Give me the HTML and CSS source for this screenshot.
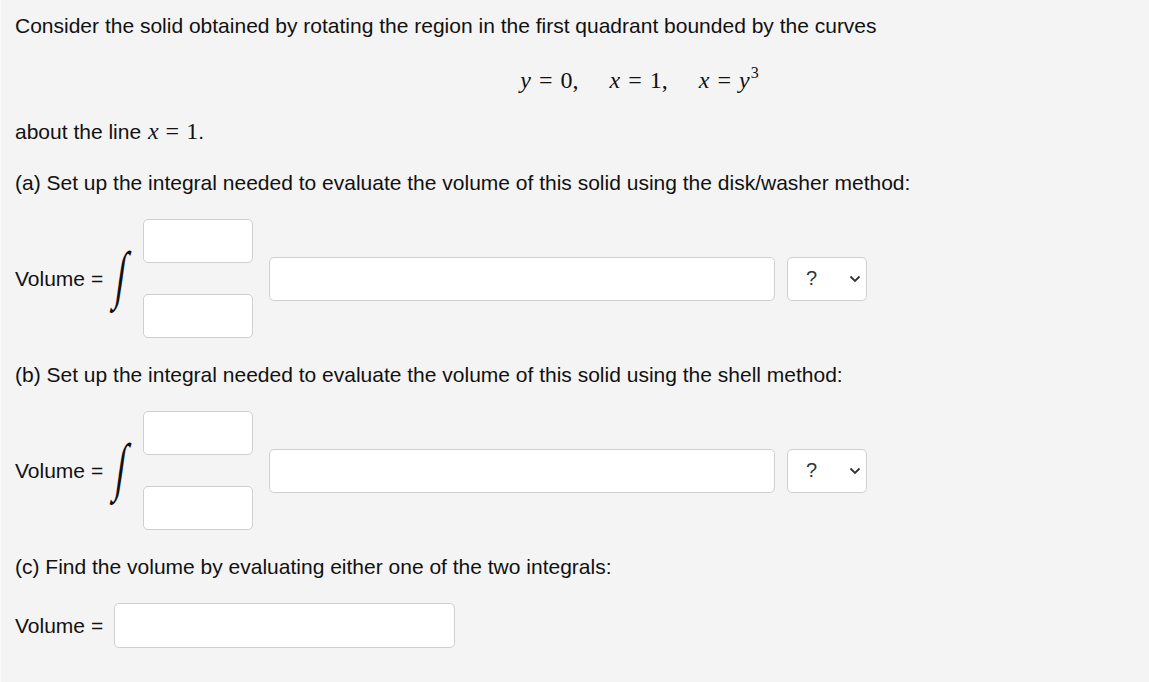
FILE: index.html
```html
<!DOCTYPE html>
<html>
<head>
<meta charset="utf-8">
<link rel="stylesheet" href="styles.css">
</head>
<body>
<div class="page">
  <p class="line first">Consider the solid obtained by rotating the region in the first quadrant bounded by the curves</p>
  <div class="display">
    <span class="math"><i>y</i><span class="rel">=</span>0,</span>
    <span class="math"><i>x</i><span class="rel">=</span>1,</span>
    <span class="math"><i>x</i><span class="rel">=</span><i>y</i><sup>3</sup></span>
  </div>
  <p class="line about">about the line <span class="math"><i>x</i><span class="rel">=</span>1</span>.</p>

  <p class="line part">(a) Set up the integral needed to evaluate the volume of this solid using the disk/washer method:</p>
  <div class="row">
    <span class="label">Volume =</span>
    <span class="integral">∫</span>
    <div class="limits">
      <div class="box small"></div>
      <div class="box small"></div>
    </div>
    <div class="box wide"></div>
    <div class="box select"><span class="q">?</span>
      <svg class="chev" width="12" height="8" viewBox="0 0 12 8"><path d="M1.5 1.5 L6 6 L10.5 1.5" fill="none" stroke="#333" stroke-width="1.8"/></svg>
    </div>
  </div>

  <p class="line part">(b) Set up the integral needed to evaluate the volume of this solid using the shell method:</p>
  <div class="row">
    <span class="label">Volume =</span>
    <span class="integral">∫</span>
    <div class="limits">
      <div class="box small"></div>
      <div class="box small"></div>
    </div>
    <div class="box wide"></div>
    <div class="box select"><span class="q">?</span>
      <svg class="chev" width="12" height="8" viewBox="0 0 12 8"><path d="M1.5 1.5 L6 6 L10.5 1.5" fill="none" stroke="#333" stroke-width="1.8"/></svg>
    </div>
  </div>

  <p class="line part">(c) Find the volume by evaluating either one of the two integrals:</p>
  <div class="row final">
    <span class="label">Volume =</span>
    <div class="box answer"></div>
  </div>
</div>
</body>
</html>
```

FILE: styles.css
```css
html, body {
  margin: 0;
  padding: 0;
  background: #f4f4f4;
}
body {
  font-family: "Liberation Sans", Arial, sans-serif;
  font-size: 21px;
  color: #111;
}
.page {
  min-height: 682px;
  box-sizing: border-box;
  border-left: 1px solid #fafafa;
  padding: 14px 15px 0 14px;
}
.line {
  margin: 0;
  line-height: 24px;
  height: 24px;
  white-space: nowrap;
}
.display {
  margin-top: 27px;
  height: 30px;
  line-height: 30px;
  padding-left: 130px;
  display: flex;
  justify-content: center;
  gap: 31px;
}
.math {
  font-family: "Liberation Serif", "Times New Roman", serif;
  font-size: 24px;
  white-space: nowrap;
}
.math i {
  font-style: italic;
}
.math .rel {
  margin: 0 8px;
}
.math sup {
  font-size: 16px;
  line-height: 0;
  position: relative;
  top: -1px;
  vertical-align: super;
  margin-left: 1px;
}
.about {
  margin-top: 24px;
}
.about .math {
  margin-left: 1px;
}
.about .math .rel {
  margin: 0 7px;
}
.part {
  margin-top: 28px;
}
.row + .part {
  margin-top: 25px;
}
.row {
  margin-top: 24px;
  display: flex;
  align-items: center;
}
.label {
  width: 93px;
  flex: none;
}
.integral {
  font-family: "Liberation Serif", serif;
  font-size: 44px;
  line-height: 44px;
  display: inline-block;
  transform: translate(-4px, -5px) skewX(-8deg) scale(0.8, 1.45);
  width: 35px;
  text-align: center;
  margin-top: 4px;
  color: #111;
}
.limits {
  display: flex;
  flex-direction: column;
  gap: 31px;
}
.box {
  box-sizing: border-box;
  background: #fff;
  border: 1px solid #cfcfcf;
  border-radius: 5px;
}
.small {
  width: 110px;
  height: 44px;
}
.wide {
  width: 506px;
  height: 44px;
  margin-left: 16px;
}
.select {
  width: 80px;
  height: 44px;
  margin-left: 12px;
  display: flex;
  align-items: center;
  padding-left: 18px;
}
.q {
  color: #2b3440;
  font-size: 20px;
}
.chev {
  margin-left: 32px;
}
.final .label {
  width: 99px;
}
.answer {
  width: 341px;
  height: 45px;
}
```
